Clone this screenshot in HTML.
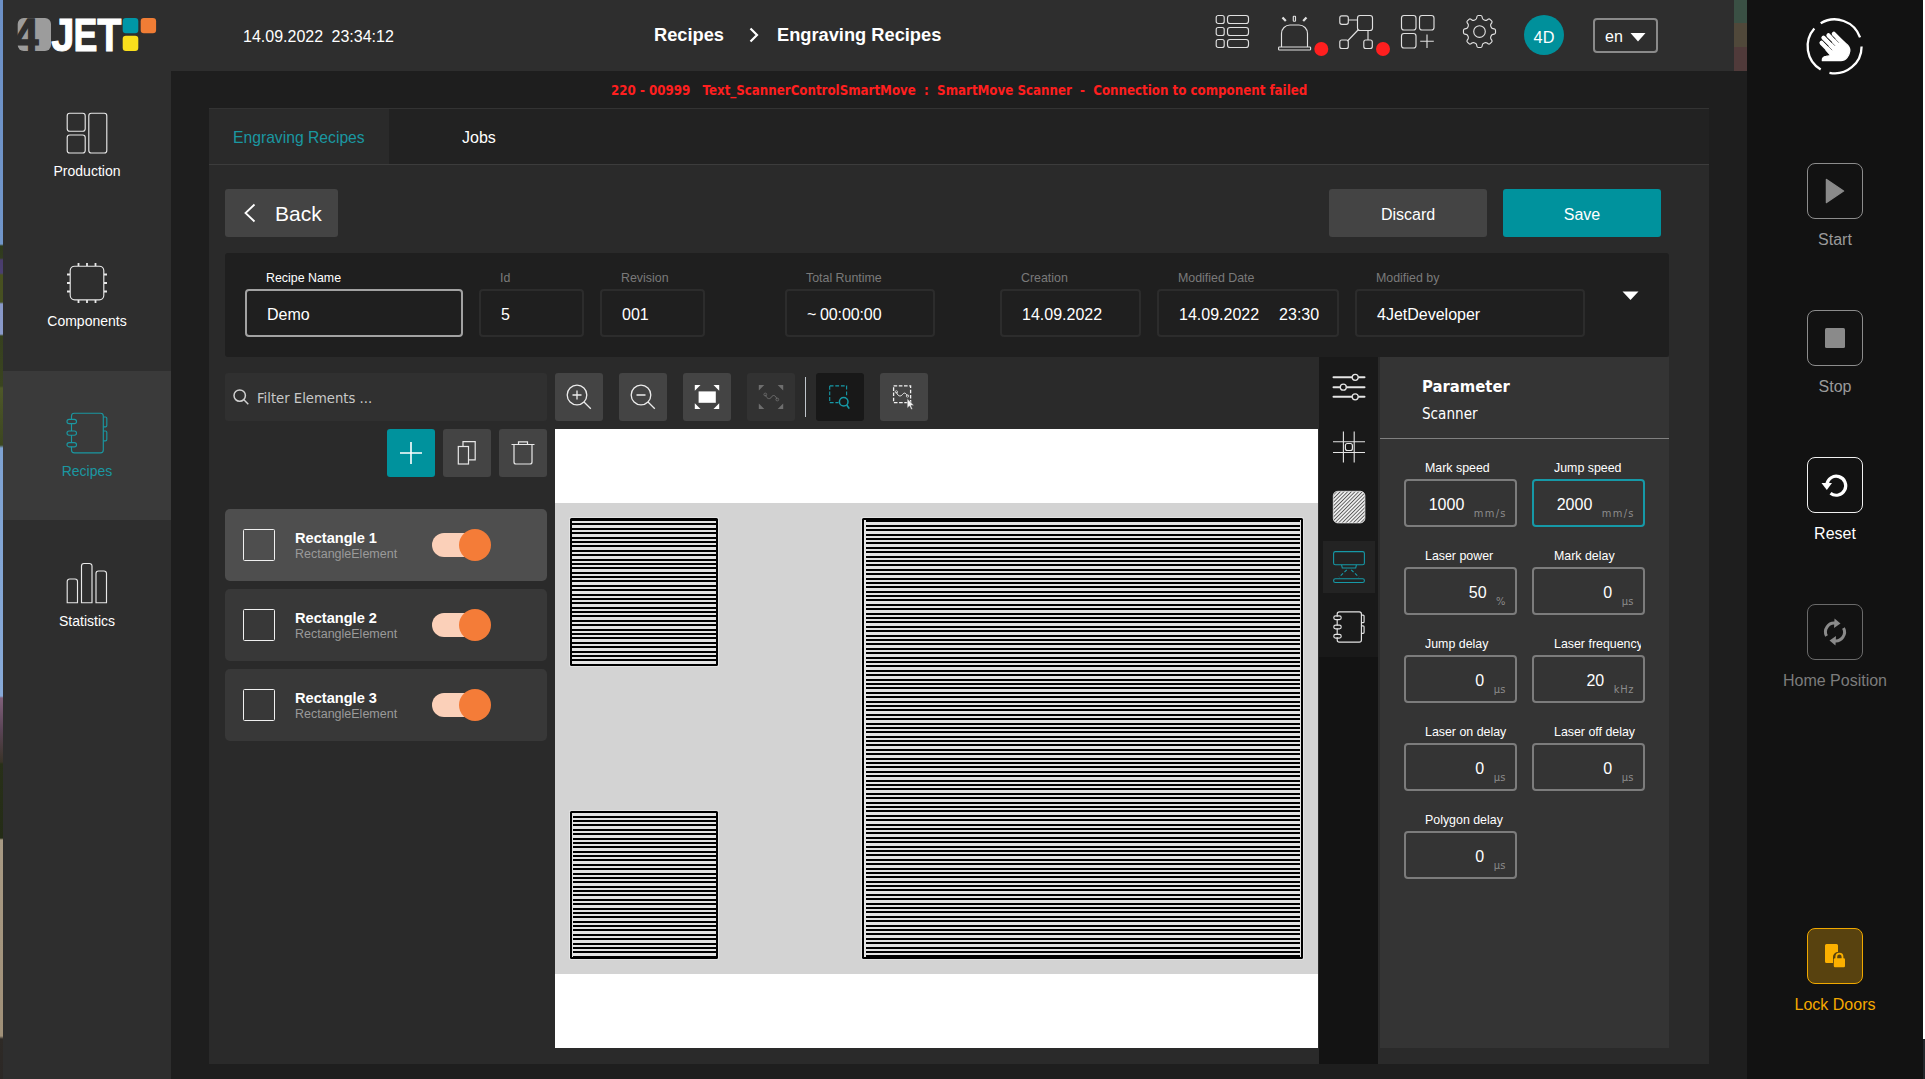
<!DOCTYPE html>
<html lang="en">
<head>
<meta charset="utf-8">
<title>Engraving Recipes</title>
<style>
*{box-sizing:border-box;margin:0;padding:0}
html,body{width:1925px;height:1079px;overflow:hidden;background:#1e1e1e}
body{position:relative;font-family:"Liberation Sans",Arial,sans-serif;color:#fff;font-size:16px}
.abs{position:absolute}
.t{position:absolute;white-space:nowrap;line-height:1}
svg{position:absolute;overflow:visible}
.seg{font-family:"DejaVu Sans Condensed","DejaVu Sans","Liberation Sans",sans-serif}
/* wallpaper strip */
#wall{left:0;top:0;width:3px;height:1079px;background:linear-gradient(to bottom,#6c90c6 0px,#7196ca 244px,#2e3a1c 246px,#323c20 258px,#4a3c6c 260px,#4a4070 273px,#48501f 275px,#465022 302px,#8898c8 304px,#8a9aca 334px,#36401e 336px,#3a4420 386px,#4e5828 388px,#3c4620 445px,#7ea2d2 448px,#88aad8 696px,#80607a 698px,#5a4456 730px,#3a3428 762px,#283018 764px,#242c16 838px,#a89a84 840px,#a09078 1036px,#2e2a26 1039px,#2c2826 1079px)}
#nav{left:3px;top:0;width:168px;height:1079px;background:#2e2e2e}
#hdr{left:3px;top:0;width:1744px;height:71px;background:#2e2e2e}
#navact{left:3px;top:371px;width:168px;height:149px;background:#3a3a3a}
#right{left:1747px;top:0;width:176px;height:1079px;background:#121212}
#redge{left:1923px;top:0;width:2px;height:1039px;background:#fff}
#redge2{left:1923px;top:1039px;width:2px;height:40px;background:#22272b}
#panel{left:209px;top:108px;width:1500px;height:956px;background:#2a2a2a;border-top:1px solid #333}
#tabs{left:209px;top:108px;width:1500px;height:57px;background:#222;border-top:1px solid #333;border-bottom:1px solid #3c3c3c}
#tab1{left:209px;top:109px;width:180px;height:55px;background:#2a2a2a}
.btn{position:absolute;border-radius:3px;background:#444}
.navlbl{position:absolute;left:3px;width:168px;text-align:center;font-size:14px;line-height:1;white-space:nowrap}
</style>
</head>
<body>
<div id="nav" class="abs"></div>
<div id="hdr" class="abs"></div>
<div id="navact" class="abs"></div>
<div id="wall" class="abs"></div>
<div id="right" class="abs"></div>
<div id="redge" class="abs"></div>
<div id="redge2" class="abs"></div>
<!-- header colour blocks -->
<div class="abs" style="left:1734px;top:0;width:13px;height:23px;background:#3a5044"></div>
<div class="abs" style="left:1734px;top:23px;width:13px;height:24px;background:#50483a"></div>
<div class="abs" style="left:1734px;top:47px;width:13px;height:24px;background:#503a3a"></div>

<svg style="left:0;top:0" width="180" height="70" viewBox="0 0 180 70">
<rect x="17.7" y="18" width="33.3" height="33" rx="6" fill="#9c9c9c"/>
<text x="14.5" y="51" font-family="Liberation Sans" font-weight="bold" font-size="46" fill="#2e2e2e" stroke="#2e2e2e" stroke-width="1.4" textLength="24" lengthAdjust="spacingAndGlyphs">4</text>
<g font-family="Liberation Sans" font-weight="bold" font-size="46" fill="#fff" stroke="#fff" stroke-width="1">
<text transform="translate(51.200,50.900) scale(0.910,1.020)">J</text>
<text transform="translate(73.600,50.900) scale(0.780,1.020)">E</text>
<text transform="translate(97.200,50.900) scale(0.860,1.020)">T</text>
</g>
<rect x="122.7" y="18" width="15.6" height="15.2" rx="3.2" fill="#0097a7"/>
<rect x="140.7" y="18" width="15.4" height="15.2" rx="3.2" fill="#f07d35"/>
<rect x="122.7" y="35.8" width="15.6" height="15.2" rx="3.2" fill="#fadf1c"/>
</svg>
<!--LOGO-->
<div class="t" id="dt" style="left:243px;top:29px;font-size:16px;word-spacing:4px">14.09.2022 23:34:12</div>
<div class="t" id="bc1" style="left:654px;top:26px;font-size:18.250px;font-weight:bold">Recipes</div>
<svg style="left:747px;top:26px" width="14" height="18" viewBox="0 0 14 18"><path d="M3.5 2.5 L10 9 L3.5 15.5" fill="none" stroke="#fff" stroke-width="2.2"/></svg>
<div class="t" id="bc2" style="left:777px;top:26px;font-size:18.250px;font-weight:bold">Engraving Recipes</div>
<div class="t seg" id="err" style="left:611px;top:84px;font-size:13.2px;font-weight:bold;color:#ff1f1f;white-space:pre">220 - 00999   Text_ScannerControlSmartMove  :  SmartMove Scanner  -  Connection to component failed</div>
<svg style="left:1215px;top:14px" width="36" height="36" viewBox="0 0 36 36" fill="none" stroke="#e0e0e0" stroke-width="1.15">
<rect x="1.2" y="1.5" width="8" height="8" rx="2"/><rect x="12.5" y="1.5" width="21" height="8" rx="2.5"/>
<rect x="1.2" y="13.5" width="8" height="8" rx="2"/><rect x="12.5" y="13.5" width="21" height="8" rx="2.5"/>
<rect x="1.2" y="25.5" width="8" height="8" rx="2"/><rect x="12.5" y="25.5" width="21" height="8" rx="2.5"/>
</svg>
<svg style="left:1277px;top:14px" width="52" height="44" viewBox="0 0 52 44" fill="none" stroke="#e0e0e0" stroke-width="1.15">
<path d="M4.5 33 V19.5 A8.5 8.5 0 0 1 13 11 H22 A8.5 8.5 0 0 1 30.5 19.5 V33"/>
<rect x="1.6" y="33" width="32" height="3" rx="0.8"/>
<rect x="16.3" y="2.2" width="2.2" height="5" rx="0.5"/>
<path d="M5.5 3.5 L8.8 7" stroke-width="2.2"/><path d="M29.5 3.5 L26.2 7" stroke-width="2.2"/>
<circle cx="44.3" cy="35" r="7" fill="#ff1f1f" stroke="none"/>
</svg>
<svg style="left:1338px;top:14px" width="54" height="44" viewBox="0 0 54 44" fill="none" stroke="#e0e0e0" stroke-width="1.15">
<rect x="1.8" y="1.8" width="8.5" height="8.5" rx="2"/>
<rect x="19.5" y="1.5" width="15" height="15" rx="2.5"/>
<rect x="1.8" y="26" width="8.5" height="8.500" rx="2"/>
<rect x="25.8" y="26" width="8.5" height="8.5" rx="2"/>
<path d="M10.3 6 H19.5 M20.5 15.5 L9.5 27 M30 16.5 V26"/>
<circle cx="45" cy="35" r="7" fill="#ff1f1f" stroke="none"/>
</svg>
<svg style="left:1400px;top:14px" width="36" height="36" viewBox="0 0 36 36" fill="none" stroke="#e0e0e0" stroke-width="1.15">
<rect x="1.5" y="1.5" width="14.5" height="14.5" rx="2.5"/><rect x="19.5" y="1.5" width="14.5" height="14.5" rx="2.5"/>
<rect x="1.5" y="19.5" width="14.5" height="14.5" rx="2.5"/><path d="M27 20.5 V34 M20.2 27.2 H33.8"/>
</svg>
<svg style="left:1462px;top:14px" width="36" height="36" viewBox="0 0 36 36" fill="none" stroke="#e0e0e0" stroke-width="1.15" id="gear">
<circle cx="17.500" cy="17.500" r="5.800"/>
<path d="M14.88 2.76 Q15.09 1.48 16.39 1.48 L18.61 1.48 Q19.91 1.48 20.12 2.76 L20.32 3.99 Q20.54 5.27 21.74 5.77 L22.80 6.21 Q24.00 6.71 25.06 5.95 L26.07 5.23 Q27.12 4.47 28.04 5.39 L29.61 6.96 Q30.53 7.88 29.77 8.93 L29.05 9.94 Q28.29 11.00 28.79 12.20 L29.23 13.26 Q29.73 14.46 31.01 14.68 L32.24 14.88 Q33.52 15.09 33.52 16.39 L33.52 18.61 Q33.52 19.91 32.24 20.12 L31.01 20.32 Q29.73 20.54 29.23 21.74 L28.79 22.80 Q28.29 24.00 29.05 25.06 L29.77 26.07 Q30.53 27.12 29.61 28.04 L28.04 29.61 Q27.12 30.53 26.07 29.77 L25.06 29.05 Q24.00 28.29 22.80 28.79 L21.74 29.23 Q20.54 29.73 20.32 31.01 L20.12 32.24 Q19.91 33.52 18.61 33.52 L16.39 33.52 Q15.09 33.52 14.88 32.24 L14.68 31.01 Q14.46 29.73 13.26 29.23 L12.20 28.79 Q11.00 28.29 9.94 29.05 L8.93 29.77 Q7.88 30.53 6.96 29.61 L5.39 28.04 Q4.47 27.12 5.23 26.07 L5.95 25.06 Q6.71 24.00 6.21 22.80 L5.77 21.74 Q5.27 20.54 3.99 20.32 L2.76 20.12 Q1.48 19.91 1.48 18.61 L1.48 16.39 Q1.48 15.09 2.76 14.88 L3.99 14.68 Q5.27 14.46 5.77 13.26 L6.21 12.20 Q6.71 11.00 5.95 9.94 L5.23 8.93 Q4.47 7.88 5.39 6.96 L6.96 5.39 Q7.88 4.47 8.93 5.23 L9.94 5.95 Q11.00 6.71 12.20 6.21 L13.26 5.77 Q14.46 5.27 14.68 3.99 Z" stroke-linejoin="round"/>
</svg>
<div class="abs" style="left:1524px;top:15px;width:40px;height:40px;border-radius:50%;background:#00909b"></div>
<div class="t" style="left:1524px;top:29px;width:40px;text-align:center;font-size:16.300px">4D</div>
<div class="abs" style="left:1593px;top:18px;width:65px;height:35px;border:2px solid #8a8a8a;border-radius:4px"></div>
<div class="t" style="left:1605px;top:29px;font-size:16px">en</div>
<svg style="left:1630px;top:32px" width="16" height="10" viewBox="0 0 16 10"><path d="M0.5 1 H15.5 L8 9.5 Z" fill="#fff"/></svg>
<!--HEADER-->
<svg style="left:66px;top:112px" width="42" height="42" viewBox="0 0 42 42" fill="none" stroke="#e8e8e8" stroke-width="1.15">
<rect x="1.2" y="1.2" width="18" height="18" rx="2.5"/><rect x="1.2" y="23" width="18" height="18" rx="2.5"/><rect x="22.8" y="1.2" width="18" height="39.800" rx="2.5"/>
</svg>
<div class="navlbl" style="top:164px">Production</div>
<svg style="left:66px;top:262px" width="42" height="42" viewBox="0 0 42 42" fill="none" stroke="#e8e8e8" stroke-width="1.15">
<rect x="4.2" y="4.2" width="33.6" height="33.6" rx="4.5"/>
<path d="M12.5 1 V4 M21 1 V4 M29.5 1 V4 M12.5 38 V41 M21 38 V41 M29.5 38 V41 M1 12.5 H4 M1 21 H4 M1 29.5 H4 M38 12.5 H41 M38 21 H41 M38 29.5 H41" stroke-width="1.8"/>
</svg>
<div class="navlbl" style="top:314px">Components</div>
<svg style="left:66px;top:412px" width="42" height="42" viewBox="0 0 42 42" fill="none" stroke="#1a97a1" stroke-width="1.15">
<path d="M5.5 7.500 V4 A2.800 2.800 0 0 1 8.300 1.200 H34.500 A2.800 2.800 0 0 1 37.300 4 V38 A2.800 2.800 0 0 1 34.500 40.800 H8.300 A2.800 2.800 0 0 1 5.500 38 V34.500 M5.500 11.500 V19 M5.500 23 V30.500"/>
<rect x="1" y="7.400" width="9.500" height="4.200" rx="2.100"/><rect x="1" y="19" width="9.500" height="4.200" rx="2.100"/><rect x="1" y="30.600" width="9.500" height="4.200" rx="2.100"/>
<path d="M37.300 5 H39.500 A1.300 1.300 0 0 1 40.800 6.300 V13.500 A1.300 1.300 0 0 1 39.500 14.800 H37.300 M37.300 19 H39.500 A1.300 1.300 0 0 1 40.800 20.300 V27.500 A1.300 1.300 0 0 1 39.500 28.800 H37.300"/>
</svg>
<div class="navlbl" style="top:464px;color:#1a97a1">Recipes</div>
<svg style="left:66px;top:562px" width="42" height="42" viewBox="0 0 42 42" fill="none" stroke="#e8e8e8" stroke-width="1.15">
<path d="M1.200 40.700 V19.500 A2.500 2.500 0 0 1 3.700 17 H9 A2.500 2.500 0 0 1 11.500 19.500 V40.700 Z"/>
<path d="M15.500 40.700 V4 A2.500 2.500 0 0 1 18 1.500 H23.500 A2.500 2.500 0 0 1 26 4 V40.700 Z"/>
<path d="M30 40.700 V11.500 A2.500 2.500 0 0 1 32.500 9 H38 A2.500 2.500 0 0 1 40.500 11.500 V40.700 Z"/>
</svg>
<div class="navlbl" style="top:614px">Statistics</div>
<!--NAV-->
<div id="panel" class="abs"></div>
<div id="tabs" class="abs"></div>
<div id="tab1" class="abs"></div>
<div class="t" id="tabt1" style="left:233px;top:130px;font-size:15.700px;color:#1a97a1">Engraving Recipes</div>
<div class="t" id="tabt2" style="left:462px;top:130px;font-size:16px">Jobs</div>
<div class="btn" style="left:225px;top:189px;width:113px;height:48px"></div>
<svg style="left:243px;top:203px" width="14" height="20" viewBox="0 0 14 20"><path d="M11.500 1.500 L2.500 10 L11.500 18.500" fill="none" stroke="#fff" stroke-width="1.8"/></svg>
<div class="t" id="back" style="left:275px;top:203px;font-size:21px">Back</div>
<div class="btn" style="left:1329px;top:189px;width:158px;height:48px"></div>
<div class="t" id="discard" style="left:1329px;width:158px;text-align:center;top:207px;font-size:16px">Discard</div>
<div class="btn" style="left:1503px;top:189px;width:158px;height:48px;background:#00929d"></div>
<div class="t" id="save" style="left:1503px;width:158px;text-align:center;top:207px;font-size:16px">Save</div>
<!--CONTENT-->
<div class="abs" style="left:225px;top:253px;width:1444px;height:104px;background:#1f1f1f;border-radius:3px"></div>
<div class="abs" style="left:245px;top:289px;width:218px;height:48px;border:2px solid #a2a2a2;border-radius:4px"></div>
<div class="t" style="left:266px;top:272px;font-size:12.400px;color:#fff">Recipe Name</div>
<div class="t" style="left:267px;top:307px;font-size:16px">Demo</div>
<div class="abs" style="left:479px;top:289px;width:105px;height:48px;border:2px solid #2c2c2c;border-radius:4px"></div>
<div class="t" style="left:500px;top:272px;font-size:12.400px;color:#7a7a7a">Id</div>
<div class="t" style="left:501px;top:307px;font-size:16px">5</div>
<div class="abs" style="left:600px;top:289px;width:105px;height:48px;border:2px solid #2c2c2c;border-radius:4px"></div>
<div class="t" style="left:621px;top:272px;font-size:12.400px;color:#7a7a7a">Revision</div>
<div class="t" style="left:622px;top:307px;font-size:16px">001</div>
<div class="abs" style="left:785px;top:289px;width:150px;height:48px;border:2px solid #2c2c2c;border-radius:4px"></div>
<div class="t" style="left:806px;top:272px;font-size:12.400px;color:#7a7a7a">Total Runtime</div>
<div class="t" style="left:807px;top:307px;font-size:16px;word-spacing:-0.600px;letter-spacing:-0.100px">~ 00:00:00</div>
<div class="abs" style="left:1000px;top:289px;width:141px;height:48px;border:2px solid #2c2c2c;border-radius:4px"></div>
<div class="t" style="left:1021px;top:272px;font-size:12.400px;color:#7a7a7a">Creation</div>
<div class="t" style="left:1022px;top:307px;font-size:16px">14.09.2022</div>
<div class="abs" style="left:1157px;top:289px;width:182px;height:48px;border:2px solid #2c2c2c;border-radius:4px"></div>
<div class="t" style="left:1178px;top:272px;font-size:12.400px;color:#7a7a7a">Modified Date</div>
<div class="t" style="left:1179px;top:307px;font-size:16px">14.09.2022<span style="display:inline-block;width:20px"></span>23:30</div>
<div class="abs" style="left:1355px;top:289px;width:230px;height:48px;border:2px solid #2c2c2c;border-radius:4px"></div>
<div class="t" style="left:1376px;top:272px;font-size:12.400px;color:#7a7a7a">Modified by</div>
<div class="t" style="left:1377px;top:307px;font-size:16px">4JetDeveloper</div>
<svg style="left:1622px;top:291px" width="18" height="10" viewBox="0 0 18 10"><path d="M0.500 0.500 H16.500 L8.500 9 Z" fill="#fff"/></svg>
<!--INFO-->
<div class="abs" style="left:225px;top:373px;width:322px;height:48px;background:#303030;border-radius:3px"></div>
<svg style="left:232px;top:388px" width="18" height="18" viewBox="0 0 18 18" fill="none" stroke="#d0d0d0" stroke-width="1.500"><circle cx="7.700" cy="7.600" r="5.700"/><path d="M11.900 11.800 L16.300 16.200"/></svg>
<div class="t seg" id="filt" style="left:257px;top:391px;font-size:14.700px;color:#c8c8c8">Filter Elements ...</div>
<div class="btn" style="left:387px;top:429px;width:48px;height:48px;background:#00929d"></div>
<svg style="left:387px;top:429px" width="48" height="48" viewBox="0 0 48 48" fill="none" stroke="#fff" stroke-width="1.600"><path d="M24 13 V35 M13 24 H35"/></svg>
<div class="btn" style="left:443px;top:429px;width:48px;height:48px"></div>
<svg style="left:443px;top:429px" width="48" height="48" viewBox="0 0 48 48" fill="none" stroke="#e8e8e8" stroke-width="1.200"><path d="M20 17.500 V12.600 H32.200 V30.800 H25.500"/><rect x="15.300" y="17.500" width="10.200" height="17.500"/></svg>
<div class="btn" style="left:499px;top:429px;width:48px;height:48px"></div>
<svg style="left:499px;top:429px" width="48" height="48" viewBox="0 0 48 48" fill="none" stroke="#e8e8e8" stroke-width="1.200"><path d="M12.500 15.500 H35.500 M19.500 15.500 V12.800 H28.500 V15.500 M15 15.500 V33 A2 2 0 0 0 17 35 H31 A2 2 0 0 0 33 33 V15.500"/></svg>
<div class="abs" style="left:225px;top:509px;width:322px;height:72px;background:#4e4e4e;border-radius:5px"></div>
<div class="abs" style="left:243px;top:529px;width:32px;height:32px;border:1.500px solid #f0f0f0;border-radius:1.500px"></div>
<div class="t" style="left:295px;top:531px;font-size:14.600px;font-weight:bold">Rectangle 1</div>
<div class="t" style="left:295px;top:548px;font-size:12.500px;color:#9a9a9a">RectangleElement</div>
<div class="abs" style="left:432px;top:533px;width:56px;height:24px;border-radius:12px;background:#fbd0b9"></div>
<div class="abs" style="left:459px;top:529px;width:32px;height:32px;border-radius:50%;background:#f47c38"></div>
<div class="abs" style="left:225px;top:589px;width:322px;height:72px;background:#383838;border-radius:5px"></div>
<div class="abs" style="left:243px;top:609px;width:32px;height:32px;border:1.500px solid #f0f0f0;border-radius:1.500px"></div>
<div class="t" style="left:295px;top:611px;font-size:14.600px;font-weight:bold">Rectangle 2</div>
<div class="t" style="left:295px;top:628px;font-size:12.500px;color:#9a9a9a">RectangleElement</div>
<div class="abs" style="left:432px;top:613px;width:56px;height:24px;border-radius:12px;background:#fbd0b9"></div>
<div class="abs" style="left:459px;top:609px;width:32px;height:32px;border-radius:50%;background:#f47c38"></div>
<div class="abs" style="left:225px;top:669px;width:322px;height:72px;background:#383838;border-radius:5px"></div>
<div class="abs" style="left:243px;top:689px;width:32px;height:32px;border:1.500px solid #f0f0f0;border-radius:1.500px"></div>
<div class="t" style="left:295px;top:691px;font-size:14.600px;font-weight:bold">Rectangle 3</div>
<div class="t" style="left:295px;top:708px;font-size:12.500px;color:#9a9a9a">RectangleElement</div>
<div class="abs" style="left:432px;top:693px;width:56px;height:24px;border-radius:12px;background:#fbd0b9"></div>
<div class="abs" style="left:459px;top:689px;width:32px;height:32px;border-radius:50%;background:#f47c38"></div>
<!--LIST-->
<div class="btn" style="left:555px;top:373px;width:48px;height:48px;background:#444"></div>
<div class="btn" style="left:619px;top:373px;width:48px;height:48px;background:#444"></div>
<div class="btn" style="left:683px;top:373px;width:48px;height:48px;background:#444"></div>
<div class="btn" style="left:747px;top:373px;width:48px;height:48px;background:#323232"></div>
<div class="btn" style="left:816px;top:373px;width:48px;height:48px;background:#181818"></div>
<div class="btn" style="left:880px;top:373px;width:48px;height:48px;background:#444"></div>
<svg style="left:555px;top:373px" width="48" height="48" viewBox="0 0 48 48" fill="none" stroke="#ececec" stroke-width="1.300"><circle cx="22" cy="22" r="9.800"/><path d="M29 29 L35.800 35.800 M17.500 22 H26.500 M22 17.500 V26.500"/></svg>
<svg style="left:619px;top:373px" width="48" height="48" viewBox="0 0 48 48" fill="none" stroke="#ececec" stroke-width="1.300"><circle cx="22" cy="22" r="9.800"/><path d="M29 29 L35.800 35.800 M17.500 22 H26.500"/></svg>
<svg style="left:683px;top:373px" width="48" height="48" viewBox="0 0 48 48" fill="#fff" stroke="none"><rect x="15.600" y="18.400" width="17.200" height="11.400"/><path d="M11.800 12 H17.500 L11.800 17.700 Z M36.200 12 H30.500 L36.200 17.700 Z M11.800 36 H17.500 L11.800 30.300 Z M36.200 36 H30.500 L36.200 30.300 Z"/></svg>
<svg style="left:747px;top:373px" width="48" height="48" viewBox="0 0 48 48" fill="#6e6e6e" stroke="none"><path d="M11.800 12 H17.300 L11.800 17.500 Z M36.200 12 H30.700 L36.200 17.500 Z M11.800 36 H17.300 L11.800 30.500 Z M36.200 36 H30.700 L36.200 30.500 Z"/><path d="M18.500 21.800 C20 26.500 23 26.500 24.500 24 S28.500 22 30 26.200" fill="none" stroke="#6e6e6e" stroke-width="1"/><circle cx="18.300" cy="21.500" r="1.400" fill="none" stroke="#6e6e6e" stroke-width="0.800"/><circle cx="30.300" cy="26.500" r="1.400" fill="none" stroke="#6e6e6e" stroke-width="0.800"/></svg>
<div class="abs" style="left:805px;top:377px;width:1px;height:40px;background:#c0c6cc"></div>
<svg style="left:816px;top:373px" width="48" height="48" viewBox="0 0 48 48" fill="none" stroke="#1699a7"><path d="M13.700 12.900 H30.600 V24 M13.700 12.900 V29.600 H22.500" stroke-width="1.100" stroke-dasharray="3.800 1.800"/><circle cx="27.700" cy="28.800" r="4.300" stroke-width="1.500"/><path d="M30.800 32 L33.200 35.600" stroke-width="1.700"/></svg>
<svg style="left:880px;top:373px" width="48" height="48" viewBox="0 0 48 48" fill="none" stroke="#f2f2f2"><rect x="13.600" y="12.900" width="17" height="16.700" stroke-width="1.300" stroke-dasharray="3.600 1.600"/><path d="M16.500 19.200 C18 24 21 23.500 22.500 21.500 S25.500 19.500 27.300 22.700" stroke-width="1"/><circle cx="16.400" cy="18.900" r="1.200" stroke-width="0.700"/><circle cx="27.500" cy="23" r="1.200" stroke-width="0.700"/><path d="M27.200 25.500 V35.200 L29.500 33 L31.200 36.600 L32.600 36 L31 32.500 H34 Z" fill="#f2f2f2" stroke="#444" stroke-width="0.500"/></svg>
<div class="abs" style="left:555px;top:429px;width:763px;height:619px;background:#fff"></div>
<div class="abs" style="left:555px;top:503px;width:763px;height:471px;background:#d3d3d3"></div>
<svg style="left:0;top:0" width="1925" height="1079" viewBox="0 0 1925 1079" shape-rendering="crispEdges">
<rect x="569" y="517" width="150" height="150" rx="2" fill="#e3e3e3" shape-rendering="auto"/>
<rect x="570" y="518" width="148" height="148" rx="1.500" fill="#000" shape-rendering="auto"/>
<rect x="572" y="520" width="144" height="144" fill="#e4e4e4"/>
<path d="M572 519h144v2h-144zM572 523h144v2h-144zM572 528h144v2h-144zM572 532h144v2h-144zM572 537h144v2h-144zM572 541h144v2h-144zM572 545h144v2h-144zM572 550h144v2h-144zM572 554h144v2h-144zM572 559h144v2h-144zM572 563h144v2h-144zM572 567h144v2h-144zM572 572h144v2h-144zM572 576h144v2h-144zM572 580h144v2h-144zM572 585h144v2h-144zM572 589h144v2h-144zM572 594h144v2h-144zM572 598h144v2h-144zM572 602h144v2h-144zM572 607h144v2h-144zM572 611h144v2h-144zM572 615h144v2h-144zM572 620h144v2h-144zM572 624h144v2h-144zM572 629h144v2h-144zM572 633h144v2h-144zM572 637h144v2h-144zM572 642h144v2h-144zM572 646h144v2h-144zM572 651h144v2h-144zM572 655h144v2h-144zM572 659h144v2h-144z" fill="#000"/>
<rect x="569" y="810" width="150" height="150" rx="2" fill="#e3e3e3" shape-rendering="auto"/>
<rect x="570" y="811" width="148" height="148" rx="1.500" fill="#000" shape-rendering="auto"/>
<rect x="572" y="813" width="144" height="144" fill="#e4e4e4"/>
<path d="M573 816h143v2h-143zM573 820h143v2h-143zM573 824h143v2h-143zM573 829h143v2h-143zM573 833h143v2h-143zM573 838h143v2h-143zM573 842h143v2h-143zM573 846h143v2h-143zM573 851h143v2h-143zM573 855h143v2h-143zM573 859h143v2h-143zM573 864h143v2h-143zM573 868h143v2h-143zM573 873h143v2h-143zM573 877h143v2h-143zM573 881h143v2h-143zM573 886h143v2h-143zM573 890h143v2h-143zM573 894h143v2h-143zM573 899h143v2h-143zM573 903h143v2h-143zM573 908h143v2h-143zM573 912h143v2h-143zM573 916h143v2h-143zM573 921h143v2h-143zM573 925h143v2h-143zM573 929h143v2h-143zM573 934h143v2h-143zM573 938h143v2h-143zM573 943h143v2h-143zM573 947h143v2h-143zM573 951h143v2h-143zM573 956h143v2h-143z" fill="#000"/>
<rect x="861" y="517" width="443" height="443" rx="2" fill="#e3e3e3" shape-rendering="auto"/>
<rect x="862" y="518" width="441" height="441" rx="1.500" fill="#000" shape-rendering="auto"/>
<rect x="864" y="520" width="437" height="437" fill="#e4e4e4"/>
<path d="M866 520h434v2h-434zM866 525h434v2h-434zM866 529h434v2h-434zM866 534h434v2h-434zM866 538h434v2h-434zM866 542h434v2h-434zM866 547h434v2h-434zM866 551h434v2h-434zM866 556h434v2h-434zM866 560h434v2h-434zM866 564h434v2h-434zM866 569h434v2h-434zM866 573h434v2h-434zM866 578h434v2h-434zM866 582h434v2h-434zM866 586h434v2h-434zM866 591h434v2h-434zM866 595h434v2h-434zM866 599h434v2h-434zM866 604h434v2h-434zM866 608h434v2h-434zM866 613h434v2h-434zM866 617h434v2h-434zM866 621h434v2h-434zM866 626h434v2h-434zM866 630h434v2h-434zM866 635h434v2h-434zM866 639h434v2h-434zM866 643h434v2h-434zM866 648h434v2h-434zM866 652h434v2h-434zM866 657h434v2h-434zM866 661h434v2h-434zM866 665h434v2h-434zM866 670h434v2h-434zM866 674h434v2h-434zM866 679h434v2h-434zM866 683h434v2h-434zM866 687h434v2h-434zM866 692h434v2h-434zM866 696h434v2h-434zM866 701h434v2h-434zM866 705h434v2h-434zM866 709h434v2h-434zM866 714h434v2h-434zM866 718h434v2h-434zM866 723h434v2h-434zM866 727h434v2h-434zM866 731h434v2h-434zM866 736h434v2h-434zM866 740h434v2h-434zM866 744h434v2h-434zM866 749h434v2h-434zM866 753h434v2h-434zM866 758h434v2h-434zM866 762h434v2h-434zM866 766h434v2h-434zM866 771h434v2h-434zM866 775h434v2h-434zM866 780h434v2h-434zM866 784h434v2h-434zM866 788h434v2h-434zM866 793h434v2h-434zM866 797h434v2h-434zM866 802h434v2h-434zM866 806h434v2h-434zM866 810h434v2h-434zM866 815h434v2h-434zM866 819h434v2h-434zM866 824h434v2h-434zM866 828h434v2h-434zM866 832h434v2h-434zM866 837h434v2h-434zM866 841h434v2h-434zM866 846h434v2h-434zM866 850h434v2h-434zM866 854h434v2h-434zM866 859h434v2h-434zM866 863h434v2h-434zM866 868h434v2h-434zM866 872h434v2h-434zM866 876h434v2h-434zM866 881h434v2h-434zM866 885h434v2h-434zM866 889h434v2h-434zM866 894h434v2h-434zM866 898h434v2h-434zM866 903h434v2h-434zM866 907h434v2h-434zM866 911h434v2h-434zM866 916h434v2h-434zM866 920h434v2h-434zM866 925h434v2h-434zM866 929h434v2h-434zM866 933h434v2h-434zM866 938h434v2h-434zM866 942h434v2h-434zM866 947h434v2h-434zM866 951h434v2h-434zM866 955h434v2h-434z" fill="#000"/>
</svg>
<!--CANVAS-->
<div class="abs" style="left:1319px;top:357px;width:59px;height:300px;background:#191919"></div>
<div class="abs" style="left:1319px;top:657px;width:59px;height:407px;background:#131313"></div>
<div class="abs" style="left:1380px;top:357px;width:289px;height:691px;background:#343434"></div>
<div class="abs" style="left:1323px;top:541px;width:52px;height:52px;background:#232323"></div>
<svg style="left:1333px;top:371px" width="32" height="32" viewBox="0 0 32 32" fill="none" stroke="#e4e4e4">
<path d="M0.500 6.300 H31.500 M0.500 16.200 H31.500 M0.500 25.800 H31.500" stroke-width="2" stroke-linecap="round"/>
<circle cx="22.200" cy="6.300" r="3" fill="#191919" stroke-width="1.300"/><circle cx="10.300" cy="16.200" r="3" fill="#191919" stroke-width="1.300"/><circle cx="22.200" cy="25.800" r="3" fill="#191919" stroke-width="1.300"/>
</svg>
<svg style="left:1333px;top:431px" width="32" height="32" viewBox="0 0 32 32" fill="none" stroke="#e4e4e4" stroke-width="1.100">
<path d="M10.400 0.500 V31.500 M21.200 0.500 V31.500 M0 10.800 H32 M0 21.500 H32"/><rect x="12.400" y="12.500" width="7" height="7" rx="2" stroke-width="1.200"/>
</svg>
<svg style="left:1333px;top:491px" width="32" height="32" viewBox="0 0 32 32">
<defs><pattern id="hp" width="2.600" height="2.600" patternUnits="userSpaceOnUse" patternTransform="rotate(-45)"><rect width="2.600" height="2.600" fill="#f0f0f0"/><rect width="2.600" height="0.900" fill="#585858"/></pattern></defs>
<rect x="0.300" y="0.300" width="31.600" height="31.600" rx="4.500" fill="url(#hp)" stroke="#e8e8e8" stroke-width="0.800"/>
</svg>
<svg style="left:1333px;top:551px" width="32" height="32" viewBox="0 0 32 32" fill="none" stroke="#1699a7" stroke-width="1.100">
<rect x="0.600" y="0.600" width="30.800" height="13.200" rx="1.800"/><path d="M8.600 13.800 L9.300 17 H22.700 L23.400 13.800"/>
<path d="M13.800 18.800 L6 26.200 M18.200 18.800 L26 26.200" stroke-dasharray="3.200 2"/>
<rect x="0.600" y="27.800" width="30.800" height="3.700" rx="1.800"/>
</svg>
<svg style="left:1333px;top:611px" width="32" height="32" viewBox="0 0 42 42" fill="none" stroke="#e4e4e4" stroke-width="1.500">
<path d="M5.500 7.500 V4 A2.800 2.800 0 0 1 8.300 1.200 H34.500 A2.800 2.800 0 0 1 37.300 4 V38 A2.800 2.800 0 0 1 34.500 40.800 H8.300 A2.800 2.800 0 0 1 5.500 38 V34.500 M5.500 11.500 V19 M5.500 23 V30.500"/>
<rect x="1" y="6.400" width="9.800" height="5" rx="2.500"/><rect x="1" y="18.500" width="9.800" height="5" rx="2.500"/><rect x="1" y="30.600" width="9.800" height="5" rx="2.500"/>
<path d="M37.300 5.500 H39.500 A1.300 1.300 0 0 1 40.800 6.800 V14 A1.300 1.300 0 0 1 39.500 15.300 H37.300 M37.300 19.500 H39.500 A1.300 1.300 0 0 1 40.800 20.800 V28 A1.300 1.300 0 0 1 39.500 29.300 H37.300"/>
</svg>
<div class="t seg" id="ptitle" style="left:1422px;top:379px;font-size:16.500px;font-weight:bold">Parameter</div>
<div class="t seg" id="psub" style="left:1422px;top:407px;font-size:15.100px">Scanner</div>
<div class="abs" style="left:1380px;top:437.500px;width:289px;height:1.500px;background:#808080"></div>
<div class="abs" style="left:1404px;top:479px;width:113px;height:48px;border:2px solid #7c7c7c;border-radius:4px"></div>
<div class="t" style="left:1425px;top:461px;font-size:12.400px;width:87px;overflow:hidden;height:14px;line-height:14px">Mark speed</div>
<div class="t" style="right:419.5px;top:496.5px;font-size:16px;display:flex;align-items:baseline"><span>1000</span><span class="seg" style="font-size:11px;color:#8c8c8c;margin-left:9.500px;position:relative;top:7px;letter-spacing:1.300px;margin-right:-1.300px">mm/s</span></div>
<div class="abs" style="left:1532px;top:479px;width:113px;height:48px;border:2px solid #1699a7;border-radius:4px"></div>
<div class="t" style="left:1554px;top:461px;font-size:12.400px;width:87px;overflow:hidden;height:14px;line-height:14px">Jump speed</div>
<div class="t" style="right:291.5px;top:496.5px;font-size:16px;display:flex;align-items:baseline"><span>2000</span><span class="seg" style="font-size:11px;color:#8c8c8c;margin-left:9.500px;position:relative;top:7px;letter-spacing:1.300px;margin-right:-1.300px">mm/s</span></div>
<div class="abs" style="left:1404px;top:567px;width:113px;height:48px;border:2px solid #7c7c7c;border-radius:4px"></div>
<div class="t" style="left:1425px;top:549px;font-size:12.400px;width:87px;overflow:hidden;height:14px;line-height:14px">Laser power</div>
<div class="t" style="right:419.5px;top:584.5px;font-size:16px;display:flex;align-items:baseline"><span>50</span><span class="seg" style="font-size:11px;color:#8c8c8c;margin-left:9.500px;position:relative;top:7px">%</span></div>
<div class="abs" style="left:1532px;top:567px;width:113px;height:48px;border:2px solid #7c7c7c;border-radius:4px"></div>
<div class="t" style="left:1554px;top:549px;font-size:12.400px;width:87px;overflow:hidden;height:14px;line-height:14px">Mark delay</div>
<div class="t" style="right:291.5px;top:584.5px;font-size:16px;display:flex;align-items:baseline"><span>0</span><span class="seg" style="font-size:11px;color:#8c8c8c;margin-left:9.500px;position:relative;top:7px;letter-spacing:0.400px;margin-right:-0.400px">µs</span></div>
<div class="abs" style="left:1404px;top:655px;width:113px;height:48px;border:2px solid #7c7c7c;border-radius:4px"></div>
<div class="t" style="left:1425px;top:637px;font-size:12.400px;width:87px;overflow:hidden;height:14px;line-height:14px">Jump delay</div>
<div class="t" style="right:419.5px;top:672.5px;font-size:16px;display:flex;align-items:baseline"><span>0</span><span class="seg" style="font-size:11px;color:#8c8c8c;margin-left:9.500px;position:relative;top:7px;letter-spacing:0.400px;margin-right:-0.400px">µs</span></div>
<div class="abs" style="left:1532px;top:655px;width:113px;height:48px;border:2px solid #7c7c7c;border-radius:4px"></div>
<div class="t" style="left:1554px;top:637px;font-size:12.400px;width:87px;overflow:hidden;height:14px;line-height:14px">Laser frequency</div>
<div class="t" style="right:291.5px;top:672.5px;font-size:16px;display:flex;align-items:baseline"><span>20</span><span class="seg" style="font-size:11px;color:#8c8c8c;margin-left:9.500px;position:relative;top:7px;letter-spacing:0.700px;margin-right:-0.700px">kHz</span></div>
<div class="abs" style="left:1404px;top:743px;width:113px;height:48px;border:2px solid #7c7c7c;border-radius:4px"></div>
<div class="t" style="left:1425px;top:725px;font-size:12.400px;width:87px;overflow:hidden;height:14px;line-height:14px">Laser on delay</div>
<div class="t" style="right:419.5px;top:760.5px;font-size:16px;display:flex;align-items:baseline"><span>0</span><span class="seg" style="font-size:11px;color:#8c8c8c;margin-left:9.500px;position:relative;top:7px;letter-spacing:0.400px;margin-right:-0.400px">µs</span></div>
<div class="abs" style="left:1532px;top:743px;width:113px;height:48px;border:2px solid #7c7c7c;border-radius:4px"></div>
<div class="t" style="left:1554px;top:725px;font-size:12.400px;width:87px;overflow:hidden;height:14px;line-height:14px">Laser off delay</div>
<div class="t" style="right:291.5px;top:760.5px;font-size:16px;display:flex;align-items:baseline"><span>0</span><span class="seg" style="font-size:11px;color:#8c8c8c;margin-left:9.500px;position:relative;top:7px;letter-spacing:0.400px;margin-right:-0.400px">µs</span></div>
<div class="abs" style="left:1404px;top:831px;width:113px;height:48px;border:2px solid #7c7c7c;border-radius:4px"></div>
<div class="t" style="left:1425px;top:813px;font-size:12.400px;width:87px;overflow:hidden;height:14px;line-height:14px">Polygon delay</div>
<div class="t" style="right:419.5px;top:848.5px;font-size:16px;display:flex;align-items:baseline"><span>0</span><span class="seg" style="font-size:11px;color:#8c8c8c;margin-left:9.500px;position:relative;top:7px;letter-spacing:0.400px;margin-right:-0.400px">µs</span></div>
<!--PARAM-->
<svg style="left:1805px;top:17px" width="60" height="60" viewBox="0 0 60 60" fill="none" stroke="#fff" stroke-width="2.300">
<path d="M15.69 6.26 A27 27 0 0 1 55.05 20.39"/><path d="M56.60 29.40 A27 27 0 0 1 24.45 55.90"/><path d="M15.69 52.54 A27 27 0 0 1 9.32 11.58"/>
<path d="M21 33 L33 20 L42.500 27.900 C44.500 30 45.200 32 44.800 34.500 C44.200 38.500 41 43.600 36 43.600 H17.300 C17 41 18.500 39.600 21 39.400 L25.800 38.500 Z" fill="#fff" stroke="#fff" stroke-width="1.200" stroke-linejoin="round"/>
<path d="M16.600 25.900 L27.500 37 M18.500 20.700 L30.300 32.600 M23.500 18.400 L33.100 28.100 M28.900 16.900 L38.600 26.700" stroke="#fff" stroke-width="4.300" stroke-linecap="round"/>
<path d="M18.600 24.600 L27.200 33.200 M22.600 21.300 L30 28.800 M27.700 19.500 L33.800 25.700" stroke="#121212" stroke-width="0.550"/>
</svg>
<div class="abs" style="left:1807px;top:163px;width:56px;height:56px;border:1px solid #8c8c8c;border-radius:8px;background:none"></div>
<svg style="left:1807px;top:163px" width="56" height="56" viewBox="0 0 56 56"><path d="M19.500 16.500 L36.500 28 L19.500 39.500 Z" fill="#8a8a8a" stroke="#8a8a8a" stroke-width="1.500" stroke-linejoin="round"/></svg>
<div class="t" style="left:1747px;width:176px;text-align:center;top:232px;font-size:16px;color:#9a9a9a">Start</div>
<div class="abs" style="left:1807px;top:310px;width:56px;height:56px;border:1px solid #8c8c8c;border-radius:8px;background:none"></div>
<svg style="left:1807px;top:310px" width="56" height="56" viewBox="0 0 56 56"><rect x="18" y="18" width="20" height="20" rx="1.500" fill="#8a8a8a"/></svg>
<div class="t" style="left:1747px;width:176px;text-align:center;top:379px;font-size:16px;color:#9a9a9a">Stop</div>
<div class="abs" style="left:1807px;top:457px;width:56px;height:56px;border:1px solid #f0f0f0;border-radius:8px;background:none"></div>
<svg style="left:1807px;top:457px" width="56" height="56" viewBox="0 0 56 56" fill="none" stroke="#fff" stroke-width="3.200"><path d="M19.800 27.500 A9.500 9.500 0 1 1 23.500 36.300"/><path d="M14.500 26 H25 L19.800 33 Z" fill="#fff" stroke="none"/></svg>
<div class="t" style="left:1747px;width:176px;text-align:center;top:526px;font-size:16px;color:#fff">Reset</div>
<div class="abs" style="left:1807px;top:604px;width:56px;height:56px;border:1px solid #6a6a6a;border-radius:8px;background:none"></div>
<svg style="left:1807px;top:604px" width="56" height="56" viewBox="0 0 56 56" fill="none" stroke="#8a8a8a" stroke-width="3"><path d="M19.500 32 A8.800 8.800 0 0 1 28.500 19.200"/><path d="M27.500 14.500 L33.500 19.500 L27 24 Z" fill="#8a8a8a" stroke="none"/><path d="M36.500 24 A8.800 8.800 0 0 1 27.500 36.800"/><path d="M28.500 41.500 L22.500 36.500 L29 32 Z" fill="#8a8a8a" stroke="none"/></svg>
<div class="t" style="left:1747px;width:176px;text-align:center;top:673px;font-size:16px;color:#7c7c7c">Home Position</div>
<div class="abs" style="left:1807px;top:928px;width:56px;height:56px;border:1px solid #f0a800;border-radius:8px;background:#58420f"></div>
<svg style="left:1807px;top:928px" width="56" height="56" viewBox="0 0 56 56" fill="#fbb000"><path d="M19.500 16 H29.500 A1.500 1.500 0 0 1 31 17.500 V24 A5 5 0 0 0 26 29 V35 H19.500 A1.500 1.500 0 0 1 18 33.500 V17.500 A1.500 1.500 0 0 1 19.500 16 Z"/><rect x="26.800" y="30.300" width="11.200" height="9" rx="1.200"/><path d="M29.300 31 V28.800 A3.100 3.100 0 0 1 35.500 28.800 V31" fill="none" stroke="#fbb000" stroke-width="1.800"/></svg>
<div class="t" style="left:1747px;width:176px;text-align:center;top:997px;font-size:16px;color:#f5a900">Lock Doors</div>
<!--RIGHT-->
</body>
</html>
